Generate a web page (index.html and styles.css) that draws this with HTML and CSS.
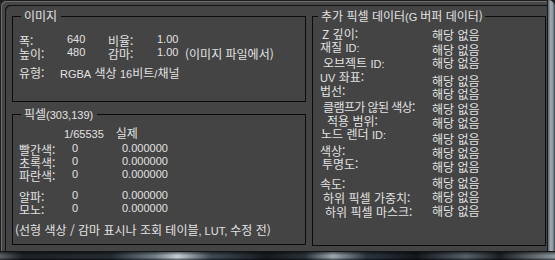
FILE: index.html
```html
<!DOCTYPE html>
<html lang="ko">

<head>
    <meta charset="UTF-8" />
    <title>픽셀 정보</title>
    <link rel="stylesheet" href="styles.css">
</head>

<body>
    <div class="window">
        <div class="main">
            <div class="client">
                <div class="left">
                    <!-- 이미지 -->
                    <fieldset class="group image">
                        <legend>이미지</legend>
                        <div class="dims">
                            <span>폭:</span><span class="n">640</span><span>비율:</span><span class="n">1.00</span><span></span>
                            <span>높이:</span><span class="n">480</span><span>감마:</span><span class="n">1.00</span><span>(이미지 파일에서)</span>
                        </div>
                        <div class="type">
                            <span class="lbl">유형:</span>
                            <span><span class="n">RGBA</span> 색상 <span class="n">16</span>비트<span class="n">/</span>채널</span>
                        </div>
                    </fieldset>

                    <!-- 픽셀 -->
                    <fieldset class="group pixel">
                        <legend>픽셀<span class="n">(303,139)</span></legend>
                        <div class="head">
                            <span class="n">1/65535</span><span class="real">실제</span>
                        </div>
                        <div class="channels">
                            <span>빨간색:</span><span class="n">0</span><span class="n">0.000000</span>
                            <span>초록색:</span><span class="n">0</span><span class="n">0.000000</span>
                            <span>파란색:</span><span class="n">0</span><span class="n">0.000000</span>
                        </div>
                        <div class="channels second">
                            <span>알파:</span><span class="n">0</span><span class="n">0.000000</span>
                            <span>모노:</span><span class="n">0</span><span class="n">0.000000</span>
                        </div>
                        <div class="note">(선형 색상 / 감마 표시나 조회 테이블<span class="n">, LUT, </span>수정 전)</div>
                    </fieldset>
                </div>

                <!-- 추가 픽셀 데이터 -->
                <fieldset class="group extra">
                    <legend>추가 픽셀 데이터<span class="n">(G </span>버퍼 데이터)</legend>
                    <div class="gbuf">
                        <div class="labels">
                            <div class="l1">Z 깊이:</div>
                            <div class="l2">재질 <span class="n">ID:</span></div>
                            <div class="l3">오브젝트 <span class="n">ID:</span></div>
                            <div class="l4"><span class="n">UV</span> 좌표:</div>
                            <div class="l5">법선:</div>
                            <div class="l6">클램프가 않된 색상:</div>
                            <div class="l7">적용 범위:</div>
                            <div class="l8">노드 렌더 <span class="n">ID:</span></div>
                            <div class="l9">색상:</div>
                            <div class="l10">투명도:</div>
                            <div class="l11">속도:</div>
                            <div class="l12">하위 픽셀 가중치:</div>
                            <div class="l13">하위 픽셀 마스크:</div>
                        </div>
                        <div class="values">
                            <div class="v1">해당 없음</div>
                            <div class="v2">해당 없음</div>
                            <div class="v3">해당 없음</div>
                            <div class="v4">해당 없음</div>
                            <div class="v5">해당 없음</div>
                            <div class="v6">해당 없음</div>
                            <div class="v7">해당 없음</div>
                            <div class="v8">해당 없음</div>
                            <div class="v9">해당 없음</div>
                            <div class="v10">해당 없음</div>
                            <div class="v11">해당 없음</div>
                            <div class="v12">해당 없음</div>
                            <div class="v13">해당 없음</div>
                        </div>
                    </div>
                </fieldset>
            </div>
            <div class="frame-right"></div>
        </div>
        <div class="frame-bottom"></div>
    </div>
</body>

</html>
```

FILE: styles.css
```css
* {
    box-sizing: border-box;
}

body {
    margin: 0;
    background: #1c1c1c;
    font-family: "Noto Sans CJK KR", sans-serif;
    font-size: 12px;
    line-height: 13px;
    color: #e2e2e2;
}

/* latin text / numbers */
.n {
    font-family: "Liberation Sans", Arial, sans-serif;
    font-size: 11px;
    line-height: 10px;
}

.window {
    width: 555px;
    height: 260px;
    display: flex;
    flex-direction: column;
    background: #444;
    border-radius: 6px 7px 0 0;
    overflow: hidden;
}

.main {
    display: flex;
    height: 251px;
}

.client {
    flex: 1;
    display: flex;
    gap: 6px;
    padding: 8px 0 0 11px;
    background: #444;
    border-left: 1px solid #1e1e1e;
    border-top: 1px solid #1e1e1e;
    border-top-left-radius: 6px;
    box-shadow: inset 1px 1px 0 #6c6c6c, inset 4px 4px 0 #464646, inset 5px 5px 0 #121212;
}

.frame-right {
    width: 8px;
    background: linear-gradient(to right, #1a1a1a 0, #1a1a1a 1px, #59626a 1px, #a1aab1 45%, #8b959d 75%, #3a3f43 100%);
}

.frame-bottom {
    height: 9px;
    border-top: 1px solid #151515;
    background:
        linear-gradient(to bottom, rgba(0, 0, 0, 0.5) 0, rgba(0, 0, 0, 0) 40%, rgba(0, 0, 0, 0) 70%, rgba(0, 0, 0, 0.6) 100%),
        linear-gradient(to right, #5a5f63 0, #1d2226 4%, #232a30 20%, #6f7e89 28%, #c3ccd2 32%, #3d4a55 38%, #151a1e 48%, #2a3238 55%, #9aa7b0 60%, #2b3540 66%, #12171b 75%, #55606a 84%, #1a1f23 90%, #8c969d 100%);
}

/* group boxes */
.group {
    margin: 0;
    padding: 0;
    min-width: 0;
    border: 1px solid #0c0c0c;
}

.group legend {
    margin-left: 8px;
    padding: 0 4px 0 3px;
    line-height: 14px;
}

.left {
    width: 294px;
    display: flex;
    flex-direction: column;
    gap: 5px;
}

.image {
    height: 93px;
}

.pixel {
    height: 138px;
}

.extra {
    width: 234px;
    height: 237px;
}

.extra legend {
    margin-left: 5px;
    padding: 0 2px 0 3px;
}

/* 이미지 */
.dims {
    display: grid;
    grid-template-columns: 48px 41px 49px 28px auto;
    padding: 11px 0 0 6px;
}

.type {
    display: flex;
    margin-top: 6px;
    padding-left: 6px;
}

.type .lbl {
    width: 41px;
}

/* 픽셀 */
.head {
    padding: 5px 0 0 51px;
}

.head .real {
    margin-left: 12px;
}

.channels {
    display: grid;
    grid-template-columns: 53px 50px auto;
    margin-top: 4px;
    padding-left: 6px;
}

.channels.second {
    margin-top: 8px;
}

.note {
    margin-top: 7px;
    padding-left: 2px;
}

/* 추가 픽셀 데이터 */
.gbuf {
    display: flex;
}

.labels {
    width: 119px;
    white-space: nowrap;
}

.values {
    flex: 1;
}

.l1 { margin-top: 4px; padding-left: 9px; }
.l2 { margin-top: 0; padding-left: 7px; }
.l3 { margin-top: 3px; padding-left: 10px; }
.l4 { margin-top: 1px; padding-left: 7px; }
.l5 { margin-top: 1px; padding-left: 7px; }
.l6 { margin-top: 3px; padding-left: 10px; letter-spacing: -0.6px; }
.l7 { margin-top: 1px; padding-left: 14px; }
.l8 { margin-top: 0; padding-left: 8px; }
.l9 { margin-top: 4px; padding-left: 7px; }
.l10 { margin-top: 0; padding-left: 9px; }
.l11 { margin-top: 7px; padding-left: 7px; }
.l12 { margin-top: 1px; padding-left: 10px; }
.l13 { margin-top: 1px; padding-left: 12px; }

.v1 { margin-top: 5px; }
.v2 { margin-top: 2px; }
.v3 { margin-top: 0; }
.v4 { margin-top: 5px; }
.v5 { margin-top: 0; }
.v6 { margin-top: 2px; }
.v7 { margin-top: 1px; }
.v8 { margin-top: 3px; }
.v9 { margin-top: 1px; }
.v10 { margin-top: 1px; }
.v11 { margin-top: 3px; }
.v12 { margin-top: 1px; }
.v13 { margin-top: 1px; }
```
